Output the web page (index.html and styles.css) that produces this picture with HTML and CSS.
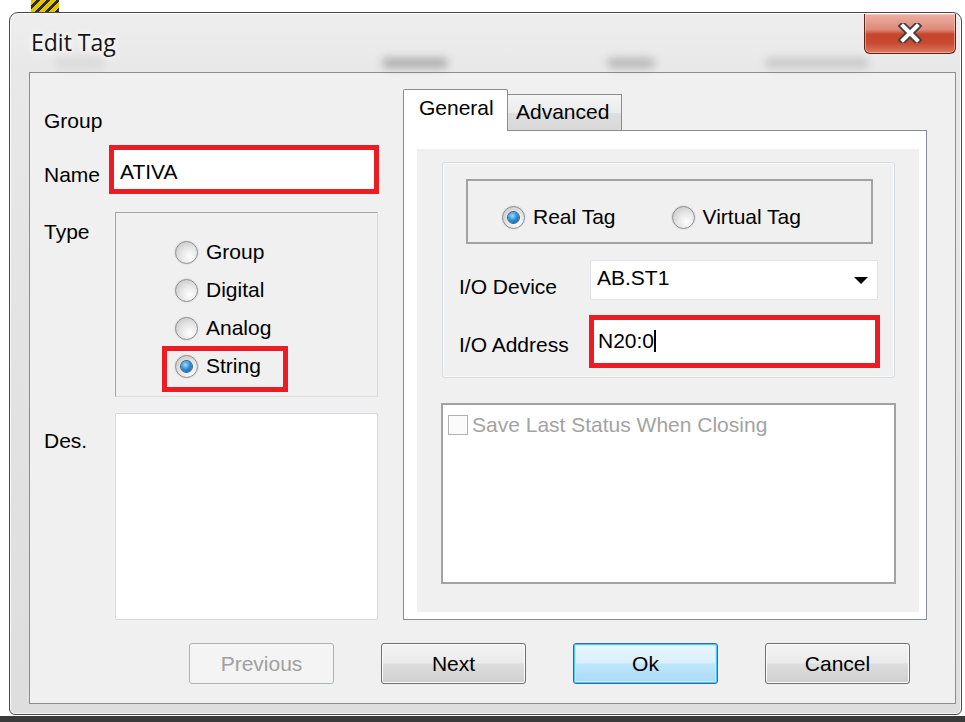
FILE: index.html
```html
<!DOCTYPE html>
<html lang="en">
<head>
<meta charset="utf-8">
<title>Edit Tag</title>
<link rel="stylesheet" href="styles.css">
</head>
<body>
<div class="desk-hazard"></div>
<section class="window">
  <header class="titlebar">
    <div class="glass" aria-hidden="true">
      <span class="smudge smudge-a"></span>
      <span class="smudge smudge-b"></span>
      <span class="smudge smudge-c"></span>
      <span class="smudge smudge-d"></span>
    </div>
    <h1 class="title">Edit Tag</h1>
    <button class="close" aria-label="Close">
      <svg width="26" height="20" viewBox="0 0 26 20">
        <path d="M6 3 L20 17 M20 3 L6 17" stroke="#3e3e3e" stroke-width="7.5" stroke-linecap="square" fill="none"/>
        <path d="M6 3 L20 17 M20 3 L6 17" stroke="#ffffff" stroke-width="4" stroke-linecap="square" fill="none"/>
      </svg>
    </button>
  </header>

  <div class="client">
    <div class="main">
      <div class="left">
        <div class="row row-group"><span class="label">Group</span></div>
        <div class="row row-name">
          <span class="label">Name</span>
          <div class="textbox name-box mark">ATIVA</div>
        </div>
        <div class="row row-type">
          <span class="label">Type</span>
          <div class="typebox">
            <div class="opt"><span class="radio"></span><span>Group</span></div>
            <div class="opt"><span class="radio"></span><span>Digital</span></div>
            <div class="opt"><span class="radio"></span><span>Analog</span></div>
            <div class="opt opt-marked"><span class="radio on"></span><span>String</span></div>
          </div>
        </div>
        <div class="row row-des">
          <span class="label">Des.</span>
          <div class="memo"></div>
        </div>
      </div>

      <div class="tabctl">
        <div class="tabs">
          <div class="tab tab-active">General</div>
          <div class="tab tab-idle">Advanced</div>
        </div>
        <div class="page">
          <div class="page-inner">
            <div class="groupbox">
              <div class="kindbox">
                <div class="opt opt-real"><span class="radio on"></span><span>Real Tag</span></div>
                <div class="opt"><span class="radio"></span><span>Virtual Tag</span></div>
              </div>
              <div class="field field-dev">
                <span class="label">I/O Device</span>
                <div class="combo"><span>AB.ST1</span><span class="arrow"></span></div>
              </div>
              <div class="field field-addr">
                <span class="label">I/O Address</span>
                <div class="textbox addr-box mark">N20:0<span class="caret"></span></div>
              </div>
            </div>
            <div class="savebox">
              <div class="check"><span class="checkbox"></span><span>Save Last Status When Closing</span></div>
            </div>
          </div>
        </div>
      </div>
    </div>

    <div class="buttons">
      <button class="btn btn-disabled">Previous</button>
      <button class="btn">Next</button>
      <button class="btn btn-default">Ok</button>
      <button class="btn">Cancel</button>
    </div>
  </div>
</section>
</body>
</html>
```

FILE: styles.css
```css
*, *::before, *::after { box-sizing: border-box; }

html, body { margin: 0; }

body {
  width: 965px;
  height: 722px;
  overflow: hidden;
  position: relative;
  background: linear-gradient(to bottom, #ffffff 0, #ffffff 716px, #3a3a3a 716px);
  font-family: "Liberation Sans", Arial, sans-serif;
  font-size: 21px;
  line-height: 24px;
  color: #000;
}

/* desktop clutter peeking above the window */
.desk-hazard {
  position: absolute;
  left: 31px;
  top: 0;
  width: 28px;
  height: 14px;
  background: repeating-linear-gradient(135deg, #e2c300 0 4px, #2b2b2b 4px 7px);
}

/* ---------- window frame ---------- */
.window {
  position: absolute;
  left: 9px;
  top: 12px;
  width: 953px;
  height: 703px;
  border: 1px solid #4a4a4a;
  border-radius: 9px 9px 6px 6px;
  background: linear-gradient(to bottom, #eeeeee 0, #e8e8e8 60px, #e2e2e2 400px, #dedede 100%);
  box-shadow: inset 0 0 0 1px rgba(255, 255, 255, 0.75);
  display: flex;
  flex-direction: column;
  overflow: hidden;
}

.titlebar {
  position: relative;
  height: 59px;
  flex: none;
}

.glass {
  position: absolute;
  inset: 0;
  filter: blur(4px);
}
.smudge {
  position: absolute;
  top: 45px;
  height: 10px;
  border-radius: 5px;
  background: #7a7a7a;
}
.smudge-a { left: 45px; width: 50px; opacity: 0.15; }
.smudge-b { left: 372px; width: 66px; opacity: 0.55; }
.smudge-c { left: 597px; width: 48px; opacity: 0.45; }
.smudge-d { left: 755px; width: 104px; opacity: 0.3; }

.title {
  position: relative;
  margin: 0;
  padding: 14px 0 0 21px;
  font-family: "Open Sans", "Liberation Sans", sans-serif;
  font-weight: 400;
  font-size: 23px;
  line-height: 31px;
  color: #161616;
  text-shadow: 0 0 6px #fff, 0 0 10px #fff;
}

.close {
  position: absolute;
  top: 1px;
  right: 5px;
  width: 92px;
  height: 40px;
  padding: 0;
  border: 1px solid #5d2218;
  border-top: 0;
  border-radius: 0 0 6px 6px;
  background: linear-gradient(to bottom, #ecb0a2 0%, #dd8a78 40%, #c5452d 52%, #c84a31 75%, #dc7a5f 100%);
  box-shadow: inset 0 0 0 1px rgba(255, 220, 210, 0.5);
  display: flex;
  align-items: center;
  justify-content: center;
}
.close svg { display: block; margin-top: -2px; }

/* ---------- client area ---------- */
.client {
  flex: 1;
  margin: 0 5px 10px 19px;
  border: 1px solid #8d8d8d;
  background: #f0f0f0;
  display: flex;
  flex-direction: column;
}

.main {
  display: flex;
  align-items: flex-start;
  gap: 24px;
  height: 547px;
  padding: 16px 0 0 14px;
}

/* left column */
.left {
  width: 335px;
  margin-top: 20px;
  display: flex;
  flex-direction: column;
}

.row {
  display: grid;
  grid-template-columns: 71px 264px;
  align-items: start;
}
.row-group { height: 24px; margin-bottom: 12px; }
.row-name { height: 49px; margin-bottom: 18px; }
.row-name .label { margin-top: 18px; }
.row-type { height: 185px; margin-bottom: 16px; }
.row-type .label { margin-top: 8px; }
.row-des { height: 207px; }
.row-des .label { margin-top: 16px; }

.label { white-space: nowrap; }

.textbox {
  background: #fff;
  white-space: nowrap;
}
.mark { border: 5px solid #ec1c24; }

.name-box {
  margin-left: -6px;
  width: 270px;
  height: 49px;
  padding: 10px 0 0 6px;
}

.typebox {
  width: 263px;
  height: 185px;
  border: 1px solid #dcdcdc;
  border-top-color: #a3a3a3;
  border-left-color: #a3a3a3;
  padding: 20px 0 0 59px;
}

.opt {
  display: flex;
  align-items: center;
  gap: 8px;
  white-space: nowrap;
}
.typebox .opt { height: 38px; }
.opt-marked { position: relative; }
.opt-marked::before {
  content: "";
  position: absolute;
  left: -13px;
  top: -1px;
  width: 126px;
  height: 46px;
  border: 5px solid #ec1c24;
}

.radio {
  position: relative;
  flex: none;
  width: 23px;
  height: 23px;
  border-radius: 50%;
  border: 1px solid #8b8e91;
  background: radial-gradient(circle at 65% 70%, #ffffff 0, #e6e6e6 45%, #c2c2c2 95%);
  box-shadow: 0 0 0 1px #e4e4e4;
}
.radio.on::after {
  content: "";
  position: absolute;
  left: 5px;
  top: 5px;
  width: 11px;
  height: 11px;
  border-radius: 50%;
  background: radial-gradient(circle at 40% 35%, #a8dcff 0, #2f8fd8 45%, #0c4b86 100%);
  box-shadow: 0 0 0 1px #34628c;
}

.memo {
  width: 263px;
  height: 207px;
  background: #fff;
  border: 1px solid #d6d9de;
  border-radius: 2px;
}

/* ---------- tab control ---------- */
.tabctl {
  width: 524px;
  display: flex;
  flex-direction: column;
}

.tabs {
  display: flex;
  align-items: flex-end;
  height: 41px;
}
.tab {
  border: 1px solid #898c95;
  border-bottom: 0;
  white-space: nowrap;
}
.tab-active {
  position: relative;
  z-index: 1;
  width: 105px;
  height: 42px;
  margin-bottom: -1px;
  padding: 6px 0 0 15px;
  background: #fff;
  border-radius: 2px 2px 0 0;
}
.tab-idle {
  width: 114px;
  height: 36px;
  border-left: 0;
  padding: 5px 0 0 8px;
  background: linear-gradient(to bottom, #f4f4f4 0%, #ececec 50%, #dedede 51%, #d9d9d9 100%);
}

.page {
  height: 490px;
  border: 1px solid #898c95;
  background: #fff;
  padding: 18px 7px 7px 13px;
}
.page-inner {
  height: 100%;
  background: #f0f0f0;
  padding: 13px 0 0 24px;
  display: flex;
  flex-direction: column;
}

.groupbox {
  width: 453px;
  height: 216px;
  margin-left: 1px;
  border: 1px solid #d4dbe1;
  border-radius: 3px;
  box-shadow: inset 0 0 0 1px #fafafa;
  padding-top: 16px;
  display: flex;
  flex-direction: column;
}

.kindbox {
  width: 407px;
  height: 65px;
  margin-left: 23px;
  border: 2px solid #a2a2a2;
  padding: 11px 0 0 34px;
  display: flex;
  align-items: center;
}
.opt-real { margin-right: 56px; }

.field {
  display: flex;
  align-items: flex-start;
  padding-left: 16px;
}
.field .label { width: 131px; flex: none; }
.field-dev { margin-top: 16px; }
.field-dev .label { margin-top: 15px; }
.field-addr { margin-top: 15px; }
.field-addr .label { margin-top: 18px; }

.combo {
  width: 288px;
  height: 40px;
  background: #fff;
  border: 1px solid #e0e2e7;
  border-radius: 2px;
  padding: 0 0 4px 6px;
  display: flex;
  align-items: center;
}
.arrow {
  margin-left: auto;
  margin-right: 9px;
  margin-top: 4px;
  border-left: 7px solid transparent;
  border-right: 7px solid transparent;
  border-top: 7px solid #000;
}

.addr-box {
  width: 291px;
  height: 53px;
  margin-left: -1px;
  padding: 9px 0 0 4px;
}
.caret {
  display: inline-block;
  width: 2px;
  height: 22px;
  vertical-align: -4px;
  background: #000;
}

.savebox {
  width: 455px;
  height: 181px;
  margin-top: 25px;
  background: #fff;
  border: 2px solid #a3a3a3;
  padding: 8px 0 0 5px;
}
.check {
  display: flex;
  align-items: center;
  gap: 4px;
  color: #a3a3a3;
  white-space: nowrap;
}
.checkbox {
  width: 20px;
  height: 20px;
  flex: none;
  border: 1px solid #b1b1b1;
  background: #fbfbfb;
}

/* ---------- buttons ---------- */
.buttons {
  display: flex;
  gap: 47px;
  margin-top: 23px;
  padding-left: 159px;
}
.btn {
  width: 145px;
  height: 41px;
  padding: 0;
  border: 1px solid #707070;
  border-radius: 3px;
  background: linear-gradient(to bottom, #f3f3f3 0%, #ebebeb 48%, #dddddd 52%, #cfcfcf 100%);
  box-shadow: inset 0 0 0 1px #fbfbfb;
  font-family: "Liberation Sans", Arial, sans-serif;
  font-size: 21px;
  line-height: 24px;
  color: #000;
}
.btn-disabled {
  border-color: #adb2b5;
  background: #f4f4f4;
  box-shadow: none;
  color: #a0a0a0;
}
.btn-default {
  border-color: #2f6f9f;
  background: linear-gradient(to bottom, #eaf6fd 0%, #d9f0fc 48%, #bee6fd 52%, #a9daf4 100%);
  box-shadow: inset 0 0 0 1px #4cc6f5, inset 0 0 0 2px #c9ecfb;
}
```
